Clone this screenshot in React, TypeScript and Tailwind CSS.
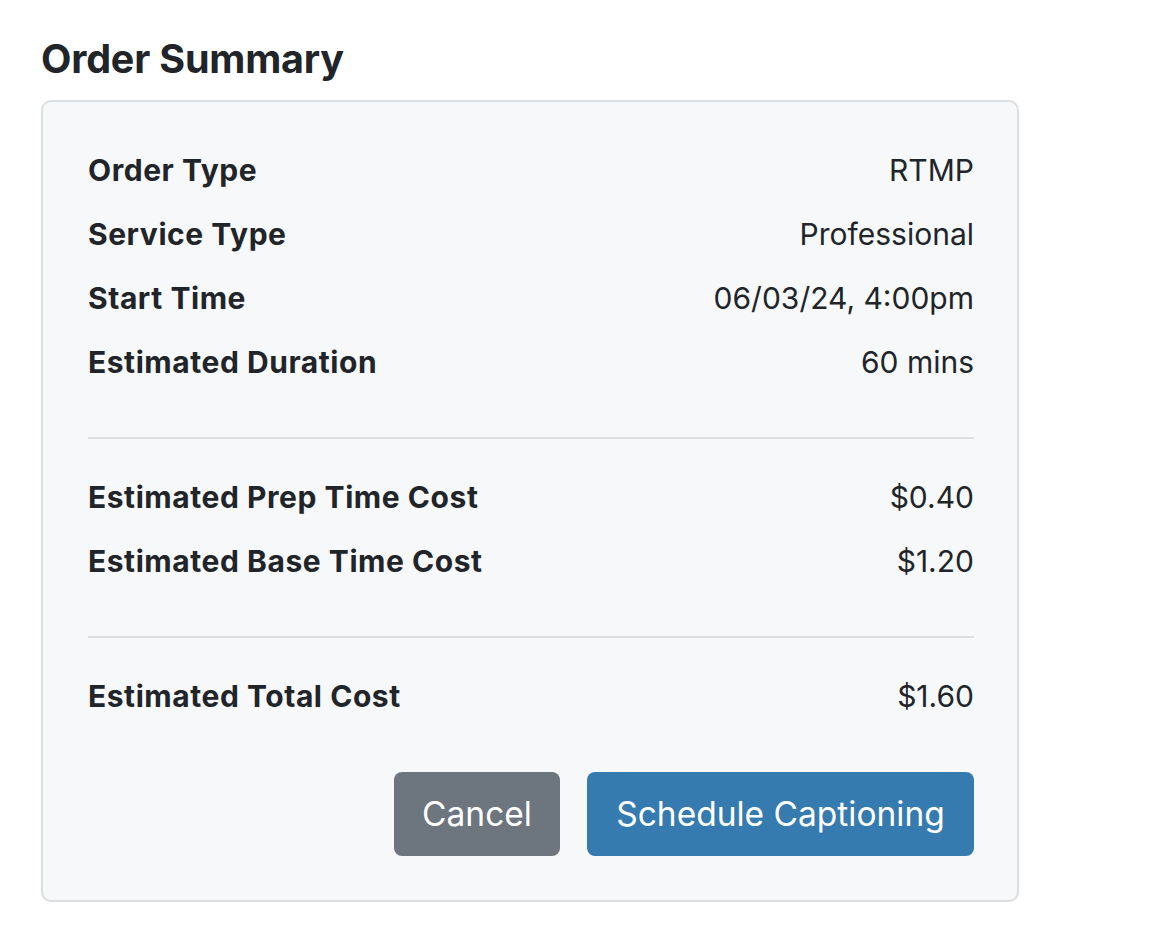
const details = [
  { label: "Order Type", value: "RTMP" },
  { label: "Service Type", value: "Professional" },
  { label: "Start Time", value: "06/03/24, 4:00pm" },
  { label: "Estimated Duration", value: "60 mins" },
];

const costs = [
  { label: "Estimated Prep Time Cost", value: "$0.40" },
  { label: "Estimated Base Time Cost", value: "$1.20" },
];

function Row({ label, value }: { label: string; value: string }) {
  return (
    <div className="flex h-[64px] items-center justify-between leading-[64px]">
      <span className="font-bold tracking-[0.55px]">{label}</span>
      <span>{value}</span>
    </div>
  );
}

export default function App() {
  return (
    <div
      className="min-h-screen bg-white pl-[41px] pt-[35px] text-[#212529]"
      style={{ fontFamily: "Inter, 'Noto Sans', sans-serif" }}
    >
      <h2 className="mb-[17px] text-[39.5px] leading-[48px] font-bold tracking-[-0.2px]">
        Order Summary
      </h2>
      <div className="w-[978px] rounded-[10px] border-2 border-[#dcdee0] bg-[#f7f8fa] pl-[45px] pr-[43px] pt-[36px] pb-[44px] text-[30px]">
        <div className="pb-[43px]">
          {details.map((row) => (
            <Row key={row.label} {...row} />
          ))}
        </div>
        <hr className="border-t-2 border-[#dcdee0]" />
        <div className="pt-[26px] pb-[43px]">
          {costs.map((row) => (
            <Row key={row.label} {...row} />
          ))}
        </div>
        <hr className="border-t-2 border-[#dcdee0]" />
        <div className="pt-[26px] pb-[44px]">
          <Row label="Estimated Total Cost" value="$1.60" />
        </div>
        <div className="flex justify-end gap-[27px]">
          <button className="h-[84px] w-[166px] rounded-[8px] bg-[#6d757e] text-center text-[33.5px] text-white">
            Cancel
          </button>
          <button className="h-[84px] w-[387px] rounded-[8px] bg-[#367bb0] text-center text-[33.5px] text-white">
            Schedule Captioning
          </button>
        </div>
      </div>
    </div>
  );
}
